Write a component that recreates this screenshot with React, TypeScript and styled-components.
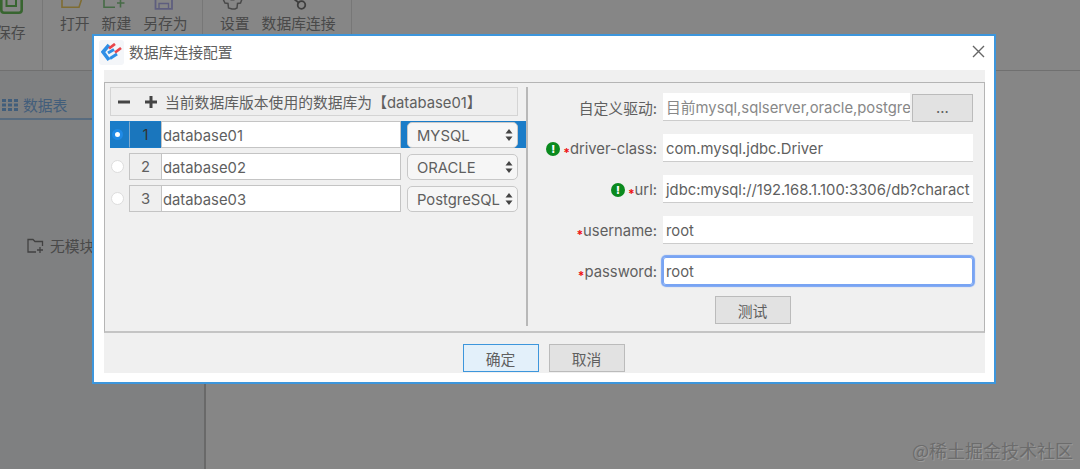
import styled, { createGlobalStyle } from 'styled-components';

const GlobalStyle = createGlobalStyle`
  html, body {
    margin: 0;
    padding: 0;
    height: 100%;
    background: #fff;
  }
`;

const FONT = `Inter, "Noto Sans CJK SC", sans-serif`;

const Page = styled.div`
  position: relative;
  width: 1080px;
  height: 469px;
  overflow: hidden;
  background: #fff;
  font-family: ${FONT};
  font-size: 14.8px;
  color: #5f5f5f;
`;

const Toolbar = styled.div`
  display: flex;
  height: 71px;
  overflow: hidden;
  border-bottom: 1px solid #d5d5d5;
  box-sizing: border-box;
`;

const ToolGroup = styled.div<{ $width: number; $pad: number }>`
  display: flex;
  gap: 12px;
  width: ${(p) => p.$width}px;
  padding-left: ${(p) => p.$pad}px;
  box-sizing: border-box;
  border-right: 1px solid #e2e2e2;
`;

const ToolButton = styled.div<{ $labelGap: number; $shift?: number }>`
  display: flex;
  flex-direction: column;
  align-items: center;
  margin-left: ${(p) => p.$shift ?? 0}px;
  line-height: 16px;
  color: #8c8c8c;
  white-space: nowrap;
  svg {
    margin-bottom: ${(p) => p.$labelGap}px;
    flex-shrink: 0;
  }
`;

const Workspace = styled.div`
  display: flex;
  height: 398px;
`;

const Sidebar = styled.div`
  width: 206px;
  box-sizing: border-box;
  border-right: 2px solid #c8c8c8;
  background: #f2f3f5;
`;

const TabBar = styled.div`
  display: flex;
  align-items: center;
  gap: 5px;
  height: 49px;
  padding: 20px 0 0 2px;
  box-sizing: border-box;
  border-bottom: 2px solid #a8ccf0;
  color: #7fb4ea;
`;

const EmptyHint = styled.div`
  display: flex;
  align-items: center;
  gap: 6px;
  margin-top: 115px;
  padding-left: 27px;
  color: #8c8c8c;
`;

const Overlay = styled.div`
  position: absolute;
  inset: 0;
  padding: 34px 0 0 92px;
  background: rgba(0, 0, 0, 0.475);
`;

const Dialog = styled.div`
  width: 904px;
  height: 350px;
  box-sizing: border-box;
  border: 2px solid #3d96dc;
  background: #fff;
`;

const DialogHeader = styled.div`
  display: flex;
  align-items: center;
  height: 34px;
  padding: 0 9px 4px 5px;
  box-sizing: border-box;
`;

const LogoBox = styled.div`
  display: flex;
  align-items: center;
  justify-content: center;
  width: 25px;
  height: 25px;
  margin: 3px 5px 0 0;
  border-radius: 3px;
  background: #f4f6f9;
`;

const CloseButton = styled.div`
  display: flex;
  margin-left: auto;
  color: #666;
`;

const DialogBody = styled.div`
  width: 881px;
  height: 303px;
  margin-left: 10px;
  padding-top: 12px;
  box-sizing: border-box;
  background: #f0f0f0;
`;

const Panel = styled.div`
  display: flex;
  height: 251px;
  box-sizing: border-box;
  border: 1px solid #b5b5b5;
  border-bottom-width: 2px;
  border-bottom-color: #c4c4c4;
`;

const LeftPane = styled.div`
  display: flex;
  flex-direction: column;
  gap: 5px;
  width: 421px;
  padding: 4px 0 0 5px;
  box-sizing: border-box;
`;

const RightPane = styled.div`
  flex: 1;
  margin: 4px 0 5px;
  padding-top: 6px;
  border-left: 2px solid #b8b8b8;
`;

const Actions = styled.div`
  display: flex;
  align-items: center;
  width: 408px;
  height: 29px;
  padding-left: 7px;
  box-sizing: border-box;
  border: 1px solid #d4d4d4;
  background: #eee;
`;

const ActionIcon = styled.span<{ $gap: number }>`
  display: flex;
  margin-right: ${(p) => p.$gap}px;
  color: #444;
`;

const Row = styled.div<{ $active?: boolean }>`
  display: flex;
  align-items: stretch;
  width: 416px;
  height: 27px;
  background: ${(p) => (p.$active ? '#1a7cc8' : 'transparent')};
`;

const RadioCell = styled.div`
  display: flex;
  align-items: center;
  justify-content: center;
  width: 14px;
  margin-right: 5px;
`;

const Radio = styled.span<{ $on?: boolean }>`
  width: ${(p) => (p.$on ? 11 : 13)}px;
  height: ${(p) => (p.$on ? 11 : 13)}px;
  border-radius: 50%;
  box-sizing: border-box;
  border: ${(p) => (p.$on ? '3.5px solid #1f8ae6' : '1px solid #ddd')};
  background: #fff;
`;

const IndexCell = styled.div<{ $active?: boolean }>`
  display: flex;
  align-items: center;
  justify-content: center;
  width: 32px;
  padding-top: 1px;
  box-sizing: border-box;
  border-top: 1px solid ${(p) => (p.$active ? '#1a7cc8' : '#c4c4c4')};
  border-left: 1px solid ${(p) => (p.$active ? '#7fa9cc' : '#c4c4c4')};
  border-bottom: 1px solid ${(p) => (p.$active ? '#1a7cc8' : '#c4c4c4')};
  background: ${(p) => (p.$active ? '#1a76bd' : '#efefef')};
  color: ${(p) => (p.$active ? '#333' : '#5f5f5f')};
`;

const NameField = styled.div`
  display: flex;
  align-items: center;
  width: 240px;
  padding: 2px 0 0 1px;
  box-sizing: border-box;
  border: 1px solid #c4c4c4;
  background: #fff;
`;

const SelectCell = styled.div`
  display: flex;
  align-items: center;
  margin-left: 6px;
`;

const SelectBox = styled.div`
  display: flex;
  align-items: center;
  justify-content: space-between;
  width: 111px;
  height: 26px;
  padding: 2px 4px 0 9px;
  box-sizing: border-box;
  border: 1px solid #c8c8c8;
  border-radius: 5px;
  background: #f6f6f6;
  white-space: nowrap;
`;

const Arrows = styled.svg`
  flex-shrink: 0;
  margin-top: -2px;
  color: #444;
`;

const FormGrid = styled.div`
  display: grid;
  grid-template-columns: 135px 310px;
  grid-auto-rows: 28px;
  row-gap: 13px;
`;

const Label = styled.div<{ $flush?: boolean }>`
  display: flex;
  align-items: center;
  justify-content: flex-end;
  padding: ${(p) => (p.$flush ? 0 : 2)}px 6px 0 0;
  box-sizing: border-box;
  white-space: nowrap;
`;

const Required = styled.span`
  margin: 8px 0 0 0;
  color: #ee1111;
  font-size: 12px;
  font-weight: 700;
  line-height: 1;
`;

const Hint = styled.span`
  display: flex;
  align-items: center;
  justify-content: center;
  width: 14px;
  height: 14px;
  margin-right: 3px;
  border-radius: 50%;
  background: #0a8a1e;
  color: #fff;
  font-size: 11px;
  font-weight: 800;
`;

const Field = styled.div<{ $focused?: boolean; $muted?: boolean }>`
  display: flex;
  align-items: center;
  padding: 2px 0 0 3px;
  box-sizing: border-box;
  overflow: hidden;
  background: #fff;
  border-bottom: 1px solid #ccc;
  white-space: nowrap;
  color: ${(p) => (p.$muted ? '#888' : '#5f5f5f')};
  ${(p) =>
    p.$focused &&
    `
    border-bottom: none;
    border-radius: 3px;
    box-shadow: 0 0 1px 2px #78a4f3, inset 0 0 0 1px #78a4f3;
  `}
`;

const FieldWithButton = styled.div`
  display: flex;
  gap: 2px;
  ${Field} {
    width: 247px;
    padding-top: 0;
  }
`;

const Button = styled.div<{ $primary?: boolean }>`
  display: flex;
  align-items: center;
  justify-content: center;
  width: 76px;
  height: 28px;
  box-sizing: border-box;
  border: 1px solid ${(p) => (p.$primary ? '#3d96dc' : '#bbb')};
  background: ${(p) => (p.$primary ? '#e3f0fa' : '#e2e2e2')};
`;

const BrowseButton = styled(Button)`
  width: 61px;
  margin-top: 1px;
  padding-bottom: 1px;
`;

const TestRow = styled.div`
  display: flex;
  justify-content: center;
  width: 449px;
  margin-top: 11px;
`;

const Footer = styled.div`
  display: flex;
  justify-content: center;
  gap: 10px;
  padding: 11px 2px 0 0;
`;

const Watermark = styled.div`
  position: absolute;
  right: 7px;
  bottom: 7px;
  font-family: "Noto Sans CJK SC", sans-serif;
  font-size: 18px;
  line-height: 24px;
  color: #6c6c6c;
  text-shadow: 1px 1px 0 #9a9a9a;
  white-space: nowrap;
`;

const rows = [
  { id: 1, name: 'database01', type: 'MYSQL', active: true },
  { id: 2, name: 'database02', type: 'ORACLE' },
  { id: 3, name: 'database03', type: 'PostgreSQL' },
];

function Logo() {
  return (
    <svg width="21" height="19" viewBox="0 0 21 19">
      <path d="M8 2 L2 9 L8 17" fill="none" stroke="#2f8fe6" strokeWidth="3.6" />
      <path d="M7 10 L13 6.500" stroke="#2f8fe6" strokeWidth="3" />
      <path d="M9 15.500 L16 11" stroke="#2f8fe6" strokeWidth="3" />
      <path d="M8 5.500 L14 1" stroke="#e8454a" strokeWidth="2.8" />
      <path d="M14 9.500 L20 5" stroke="#e8454a" strokeWidth="2.8" />
    </svg>
  );
}

export default function App() {
  return (
    <>
      <GlobalStyle />
      <Page>
        <Toolbar>
          <ToolGroup $width={43} $pad={0}>
            <ToolButton $labelGap={11} $shift={-4}>
              <svg width="28" height="14" viewBox="0 0 28 14" fill="none" stroke="#6cc05c" strokeWidth="2.6">
                <path d="M4.300 -2 V10 Q4.300 12.700 7 12.700 H22 Q24.700 12.700 24.700 10 V-2" />
                <path d="M9.500 -2 V6 H19 V-2" strokeWidth="2" />
              </svg>
              保存
            </ToolButton>
          </ToolGroup>
          <ToolGroup $width={160} $pad={17}>
            <ToolButton $labelGap={8}>
              <svg width="27" height="8" viewBox="0 0 27 8" fill="none" stroke="#f2cf62" strokeWidth="1.6">
                <path d="M1 -2 V7.200 H18 L21 -2" />
              </svg>
              打开
            </ToolButton>
            <ToolButton $labelGap={8}>
              <svg width="27" height="8" viewBox="0 0 27 8" fill="none" stroke="#86cc86" strokeWidth="1.6">
                <path d="M1 -2 V7.200 H12" />
                <path d="M17.500 -2 V7.500 M14 3 H21.500" />
              </svg>
              新建
            </ToolButton>
            <ToolButton $labelGap={6}>
              <svg width="23" height="10" viewBox="0 0 23 10" fill="none" stroke="#b4b4f0" strokeWidth="1.8">
                <path d="M1.500 -2 V8.800 H18 V-2" />
                <path d="M5 9 V3.500 H14.500 V9" strokeWidth="1.4" />
              </svg>
              另存为
            </ToolButton>
          </ToolGroup>
          <ToolGroup $width={149} $pad={17}>
            <ToolButton $labelGap={6}>
              <svg width="25" height="10" viewBox="0 0 25 10" fill="none" stroke="#8c8c8c" strokeWidth="1.5">
                <path d="M1 -1 L3 3 L6 3.500 L6.500 8 L10 9 H13 L15 8 L15.500 3.500 L18.500 3 L20 -1" />
                <path d="M6 -3 A5 5 0 0 0 15 -3" />
              </svg>
              设置
            </ToolButton>
            <ToolButton $labelGap={6}>
              <svg width="17" height="10" viewBox="0 0 17 10" fill="none" stroke="#777" strokeWidth="1.8">
                <circle cx="11.500" cy="5" r="3.800" />
                <path d="M8.500 2.500 L4 -1" />
              </svg>
              数据库连接
            </ToolButton>
          </ToolGroup>
        </Toolbar>
        <Workspace>
          <Sidebar>
            <TabBar>
              <svg width="16" height="12" viewBox="0 0 16 12" fill="currentColor">
                <path d="M0 0h4v3H0zM6 0h4v3H6zM12 0h4v3h-4zM0 4.500h4v3H0zM6 4.500h4v3H6zM12 4.500h4v3h-4zM0 9h4v3H0zM6 9h4v3H6zM12 9h4v3h-4z" />
              </svg>
              数据表
            </TabBar>
            <EmptyHint>
              <svg width="17" height="16" viewBox="0 0 17 16" fill="none" stroke="#7c7c7c" strokeWidth="1.3">
                <path d="M9 14 H1 V1.500 H6 L8 3.500 H15.500 V8" />
                <path d="M13 9 V15 M10 12 H16" />
              </svg>
              无模块
            </EmptyHint>
          </Sidebar>
        </Workspace>
        <Overlay>
          <Dialog>
            <DialogHeader>
              <LogoBox>
                <Logo />
              </LogoBox>
              数据库连接配置
              <CloseButton>
                <svg width="13" height="13" viewBox="0 0 13 13" stroke="currentColor" strokeWidth="1.4">
                  <path d="M1 1 L12 12 M12 1 L1 12" />
                </svg>
              </CloseButton>
            </DialogHeader>
            <DialogBody>
              <Panel>
                <LeftPane>
                  <Actions>
                    <ActionIcon $gap={15}>
                      <svg width="12" height="12" viewBox="0 0 12 12">
                        <rect x="0" y="4.500" width="12" height="3" fill="currentColor" />
                      </svg>
                    </ActionIcon>
                    <ActionIcon $gap={8}>
                      <svg width="12" height="12" viewBox="0 0 12 12">
                        <path d="M0 4.500h4.500V0h3v4.500H12v3H7.500V12h-3V7.500H0z" fill="currentColor" />
                      </svg>
                    </ActionIcon>
                    当前数据库版本使用的数据库为【database01】
                  </Actions>
                  {rows.map((row) => (
                    <Row key={row.id} $active={row.active}>
                      <RadioCell>
                        <Radio $on={row.active} />
                      </RadioCell>
                      <IndexCell $active={row.active}>{row.id}</IndexCell>
                      <NameField>{row.name}</NameField>
                      <SelectCell>
                        <SelectBox>
                          {row.type}
                          <Arrows width="8" height="14" viewBox="0 0 8 14" fill="currentColor">
                            <path d="M4 1 L7.500 5.500 H0.500 Z M4 13 L0.500 8.500 H7.500 Z" />
                          </Arrows>
                        </SelectBox>
                      </SelectCell>
                    </Row>
                  ))}
                </LeftPane>
                <RightPane>
                  <FormGrid>
                    <Label $flush>自定义驱动:</Label>
                    <FieldWithButton>
                      <Field $muted>目前mysql,sqlserver,oracle,postgre</Field>
                      <BrowseButton>...</BrowseButton>
                    </FieldWithButton>
                    <Label>
                      <Hint>!</Hint>
                      <Required>*</Required>driver-class:
                    </Label>
                    <Field>com.mysql.jdbc.Driver</Field>
                    <Label>
                      <Hint>!</Hint>
                      <Required>*</Required>url:
                    </Label>
                    <Field>jdbc:mysql://192.168.1.100:3306/db?charact</Field>
                    <Label>
                      <Required>*</Required>username:
                    </Label>
                    <Field>root</Field>
                    <Label>
                      <Required>*</Required>password:
                    </Label>
                    <Field $focused>root</Field>
                  </FormGrid>
                  <TestRow>
                    <Button>测试</Button>
                  </TestRow>
                </RightPane>
              </Panel>
              <Footer>
                <Button $primary>确定</Button>
                <Button>取消</Button>
              </Footer>
            </DialogBody>
          </Dialog>
        </Overlay>
        <Watermark>@稀土掘金技术社区</Watermark>
      </Page>
    </>
  );
}
